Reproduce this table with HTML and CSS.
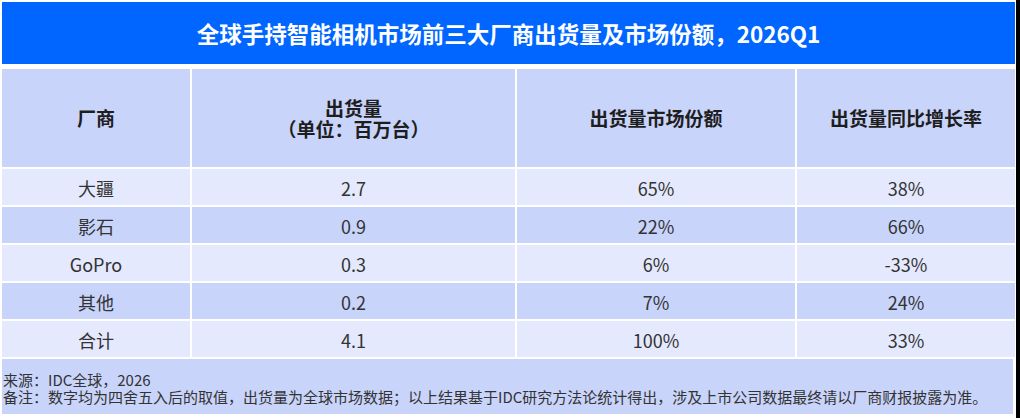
FILE: index.html
```html
<!DOCTYPE html>
<html lang="zh-CN">
<head>
<meta charset="utf-8">
<link rel="stylesheet" href="styles.css">
</head>
<body>
<div class="page">
  <div class="title">全球手持智能相机市场前三大厂商出货量及市场份额，2026Q1</div>
  <div class="table">
    <div class="cell head">厂商</div>
    <div class="cell head">出货量<br>（单位：百万台）</div>
    <div class="cell head">出货量市场份额</div>
    <div class="cell head">出货量同比增长率</div>

    <div class="cell light">大疆</div>
    <div class="cell light">2.7</div>
    <div class="cell light">65%</div>
    <div class="cell light">38%</div>

    <div class="cell dark">影石</div>
    <div class="cell dark">0.9</div>
    <div class="cell dark">22%</div>
    <div class="cell dark">66%</div>

    <div class="cell light">GoPro</div>
    <div class="cell light">0.3</div>
    <div class="cell light">6%</div>
    <div class="cell light">-33%</div>

    <div class="cell dark">其他</div>
    <div class="cell dark">0.2</div>
    <div class="cell dark">7%</div>
    <div class="cell dark">24%</div>

    <div class="cell light">合计</div>
    <div class="cell light">4.1</div>
    <div class="cell light">100%</div>
    <div class="cell light">33%</div>
  </div>
  <div class="footer">
    <div>来源：IDC全球，2026</div>
    <div>备注：数字均为四舍五入后的取值，出货量为全球市场数据；以上结果基于IDC研究方法论统计得出，涉及上市公司数据最终请以厂商财报披露为准。</div>
  </div>
</div>
</body>
</html>
```

FILE: styles.css
```css
html, body {
  margin: 0;
  padding: 0;
  background: #000;
}
body {
  width: 1020px;
  height: 418px;
  overflow: hidden;
}
.page {
  width: 1016px;
  height: 418px;
  background: #fff;
  padding: 2px 0 0 2px;
  box-sizing: border-box;
  font-family: "Noto Sans CJK SC", "Noto Sans", sans-serif;
  color: #333;
}
.title {
  width: 1013px;
  height: 62px;
  background: #0066ff;
  color: #fff;
  font-weight: 700;
  font-size: 22.5px;
  display: flex;
  align-items: center;
  justify-content: center;
  margin-bottom: 5px;
}
.table {
  width: 1013px;
  display: grid;
  grid-template-columns: 188px 323px 278px 218px;
  grid-template-rows: 98px 36px 36px 36px 36px 36px;
  column-gap: 2px;
  row-gap: 2px;
  margin-bottom: 2px;
}
.cell {
  display: flex;
  align-items: center;
  justify-content: center;
  text-align: center;
  font-size: 18px;
  padding-top: 2px;
  box-sizing: border-box;
}
.head {
  background: #c9d4fb;
  font-weight: 700;
  font-size: 19px;
  line-height: 21.5px;
  color: #1e1e1e;
  padding-top: 0;
}
.light {
  background: #e4e9fd;
}
.dark {
  background: #c9d4fb;
}
.footer {
  width: 1011px;
  height: 55px;
  background: #c9d4fb;
  display: flex;
  flex-direction: column;
  justify-content: center;
  font-size: 15px;
  line-height: 17px;
  padding: 2px 0 0 1px;
  box-sizing: border-box;
  color: #333;
}
```
